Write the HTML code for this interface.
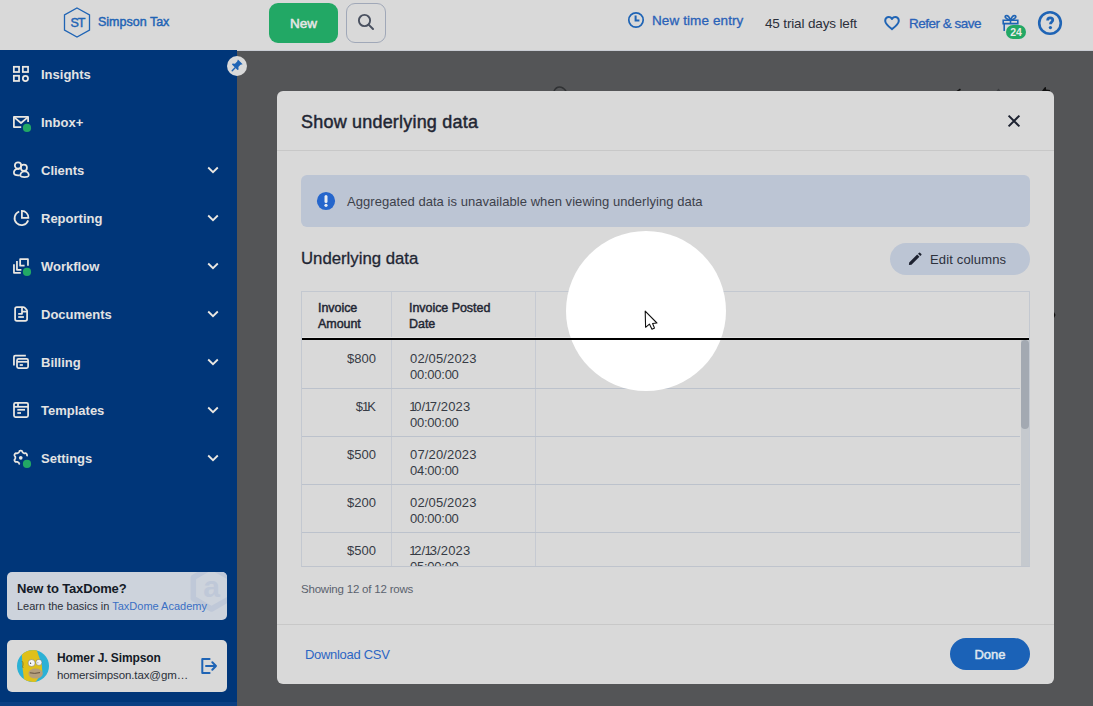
<!DOCTYPE html>
<html><head><meta charset="utf-8">
<style>
*{box-sizing:border-box;margin:0;padding:0}
html,body{width:1093px;height:706px;overflow:hidden;background:#545557;font-family:"Liberation Sans",sans-serif}
.a{position:absolute;white-space:nowrap}
#hdr{position:absolute;left:0;top:0;width:1093px;height:50px;background:#d9d9d9}
#hline{position:absolute;left:237px;top:50px;width:856px;height:1px;background:#c9ccd3}
#side{position:absolute;left:0;top:50px;width:237px;height:656px;background:#003679}
.nav{position:absolute;left:0;width:237px;height:48px}
.nav .t{position:absolute;left:41px;top:1px;line-height:48px;font-size:13px;font-weight:bold;color:#e3e3e3}
.nav svg.ic{position:absolute;left:8px;top:10px}
.nav svg.ch{position:absolute;left:207px;top:20px}
#modal{position:absolute;left:277px;top:91px;width:777px;height:593px;background:#d9d9d9;border-radius:6px}
.th{font-size:12.5px;line-height:16px;color:#1f2633;letter-spacing:-0.05px;-webkit-text-stroke:0.45px #1f2633}
.amt{left:16px;width:58px;text-align:right;font-size:13px;line-height:16px;color:#363b45}
.dt{left:108px;font-size:13px;line-height:16px;color:#363b45;letter-spacing:0.15px}
.tm{letter-spacing:-0.25px}
.rl{left:0;width:718px;height:1px;background:#bcc2cc}
#tbl{overflow:hidden}
.o{letter-spacing:-2px;margin-left:-1px}
.o0{letter-spacing:-2.2px;margin-left:-0.8px}
</style></head><body>
<div id="hdr">
  <!-- logo -->
  <svg class="a" style="left:63px;top:7px" width="28" height="31" viewBox="0 0 28 31">
    <path d="M14 1 L26.5 8 L26.5 23 L14 30 L1.5 23 L1.5 8 Z" fill="none" stroke="#1f64b5" stroke-width="1.3"/>
  </svg>
  <div class="a" style="left:70.5px;top:12.5px;font-size:12.5px;color:#1f64b5;line-height:20px;letter-spacing:-1px;-webkit-text-stroke:0.45px #1f64b5">ST</div>
  <div class="a" style="left:98px;top:12px;font-size:12.5px;color:#1f64b5;line-height:20px;letter-spacing:0px;-webkit-text-stroke:0.45px #1f64b5">Simpson Tax</div>
  <div class="a" style="left:269px;top:3px;width:69px;height:40px;border-radius:9px;background:#22a865;color:#e6e6e6;font-size:13.5px;text-align:center;line-height:42px;-webkit-text-stroke:0.5px #e6e6e6">New</div>
  <div class="a" style="left:346px;top:3px;width:40px;height:40px;border-radius:9px;border:1px solid #a0a8b8"></div>
  <svg class="a" style="left:357px;top:13px" width="18" height="18" viewBox="0 0 18 18">
    <circle cx="7.5" cy="7.5" r="5.6" fill="none" stroke="#4a5160" stroke-width="1.9"/>
    <path d="M11.6 11.6 L16 16" stroke="#4a5160" stroke-width="2" stroke-linecap="round"/>
  </svg>
  <!-- time entry -->
  <svg class="a" style="left:627px;top:11px" width="18" height="18" viewBox="0 0 18 18">
    <circle cx="9" cy="9" r="7.2" fill="none" stroke="#1f64b5" stroke-width="1.7"/>
    <path d="M8.6 4.6 V9.4 H12.4" fill="none" stroke="#1f64b5" stroke-width="2"/>
  </svg>
  <div class="a" style="left:652px;top:10.5px;font-size:13.5px;color:#2a62b8;line-height:20px;letter-spacing:0.1px;-webkit-text-stroke:0.3px #2a62b8">New time entry</div>
  <div class="a" style="left:765px;top:14px;font-size:13.5px;color:#2b2f3a;line-height:20px;letter-spacing:-0.15px">45 trial days left</div>
  <svg class="a" style="left:883px;top:15px" width="18" height="16" viewBox="0 0 18 16">
    <path d="M9 14.1 C6 11.8 2.4 9.2 2.2 6 C2.1 3.4 3.9 2.1 5.8 2.1 C7.3 2.1 8.3 2.9 9 4 C9.7 2.9 10.7 2.1 12.2 2.1 C14.1 2.1 15.9 3.4 15.8 6 C15.6 9.2 12 11.8 9 14.1 Z" fill="none" stroke="#1f64b5" stroke-width="2" stroke-linejoin="round"/>
  </svg>
  <div class="a" style="left:909px;top:13.5px;font-size:13.5px;color:#2a62b8;line-height:20px;letter-spacing:-0.5px;-webkit-text-stroke:0.3px #2a62b8">Refer &amp; save</div>
  <!-- gift -->
  <svg class="a" style="left:1001px;top:13px" width="20" height="20" viewBox="0 0 20 20">
    <path d="M2.2 7.3 H16.8 V10.6 H2.2 Z" fill="none" stroke="#1f64b5" stroke-width="1.6"/>
    <path d="M3.2 10.6 V18" stroke="#1f64b5" stroke-width="1.6"/>
    <path d="M9.5 7.3 C8.5 4.5 6.5 2.2 4.8 2.8 C3.3 3.4 4.3 6.2 9.5 7.3 C10.5 4.5 12.5 2.2 14.2 2.8 C15.7 3.4 14.7 6.2 9.5 7.3" fill="none" stroke="#1f64b5" stroke-width="1.6"/>
    <path d="M9.5 7.3 V10.6" stroke="#1f64b5" stroke-width="1.6"/>
  </svg>
  <div class="a" style="left:1006px;top:25px;width:20px;height:14px;border-radius:7px;background:#22a865;color:#eaeaea;font-size:10.5px;font-weight:bold;text-align:center;line-height:14px">24</div>
  <svg class="a" style="left:1037px;top:10px" width="26" height="26" viewBox="0 0 26 26">
    <circle cx="13" cy="13" r="10.8" fill="none" stroke="#1f64b5" stroke-width="2.6"/>
    <path d="M10.6 10.4 C10.6 8.7 11.7 7.9 13.2 7.9 C14.8 7.9 15.8 8.8 15.8 10.1 C15.8 11.9 13.4 12.1 13.4 14.3" fill="none" stroke="#1f64b5" stroke-width="2.7"/>
    <circle cx="13.4" cy="17.6" r="1.65" fill="#1f64b5"/>
  </svg>
</div>
<div id="hline"></div>
<div id="side">
<div class="nav" style="top:0px"><svg class="ic" width="30" height="30" viewBox="0 0 30 30"><g fill="none" stroke="#ebe8e2" stroke-width="1.75"><rect x="5.85" y="6.8" width="5.2" height="5.2"/><rect x="14.85" y="6.8" width="5.2" height="5.2"/><rect x="5.85" y="15.75" width="5.2" height="5.2"/><circle cx="17.45" cy="18.4" r="2.6"/></g></svg><div class="t">Insights</div></div>
<div class="nav" style="top:48px"><svg class="ic" width="30" height="30" viewBox="0 0 30 30"><g fill="none" stroke="#ebe8e2" stroke-width="1.75" stroke-linejoin="round"><path d="M13.2 19 H5.9 V8.95 H20.1 V13.9"/><path d="M6.3 9.4 L13 15 L19.7 9.4"/></g><circle cx="19" cy="19.9" r="4.1" fill="#22a865"/></svg><div class="t">Inbox+</div></div>
<div class="nav" style="top:96px"><svg class="ic" width="30" height="30" viewBox="0 0 30 30"><g fill="none" stroke="#ebe8e2" stroke-width="1.75"><circle cx="10" cy="9.4" r="3.15"/><path d="M11.6 13.2 C11 13 10.5 12.9 9.8 12.9 C7.2 12.9 5.7 14.6 5.9 16.9 C6.1 18.8 8 19.3 10.2 19.3 H11.8"/><circle cx="15.9" cy="11.7" r="3.05"/><path d="M16.6 15.4 C20 15.4 21.2 18 20.6 19.8 C20.1 21.1 18.4 21.1 16.5 21.1 C14.6 21.1 12.9 21.1 12.5 19.8 C12 18 13.2 15.4 16.6 15.4 Z"/></g></svg><div class="t">Clients</div><svg class="ch" width="12" height="8" viewBox="0 0 12 8"><path d="M1.2 1.5 L6 6.2 L10.8 1.5" fill="none" stroke="#ebe8e2" stroke-width="1.8"/></svg></div>
<div class="nav" style="top:144px"><svg class="ic" width="30" height="30" viewBox="0 0 30 30"><g fill="none" stroke="#ebe8e2" stroke-width="1.75"><path d="M11.2 7.5 A7 7 0 1 0 20.2 16.4"/><path d="M13.9 6.95 V13.8 H20.4 A6.6 6.6 0 0 0 13.9 6.95 Z"/></g></svg><div class="t">Reporting</div><svg class="ch" width="12" height="8" viewBox="0 0 12 8"><path d="M1.2 1.5 L6 6.2 L10.8 1.5" fill="none" stroke="#ebe8e2" stroke-width="1.8"/></svg></div>
<div class="nav" style="top:192px"><svg class="ic" width="30" height="30" viewBox="0 0 30 30"><g fill="none" stroke="#ebe8e2" stroke-width="1.75" stroke-linejoin="round"><path d="M5.95 12.2 V20.8 H12.8"/><path d="M8.95 9.1 V17.8 H13.4"/><path d="M16.6 13.65 H12.15 V7.05 H19.95 V13.8"/></g><circle cx="19" cy="19.9" r="4.1" fill="#22a865"/></svg><div class="t">Workflow</div><svg class="ch" width="12" height="8" viewBox="0 0 12 8"><path d="M1.2 1.5 L6 6.2 L10.8 1.5" fill="none" stroke="#ebe8e2" stroke-width="1.8"/></svg></div>
<div class="nav" style="top:240px"><svg class="ic" width="30" height="30" viewBox="0 0 30 30"><g fill="none" stroke="#ebe8e2" stroke-width="1.75" stroke-linejoin="round"><path d="M8.9 7.1 H15.2 Q16 7.1 16.6 7.7 L18.5 9.6 Q19.1 10.2 19.1 11 V19.1 Q19.1 20.9 17.3 20.9 H8.9 Q7.1 20.9 7.1 19.1 V8.9 Q7.1 7.1 8.9 7.1 Z"/><path d="M14 7.1 V13.8 H10.2"/><path d="M14 11.6 H19"/><path d="M10.2 17 H15.9"/></g></svg><div class="t">Documents</div><svg class="ch" width="12" height="8" viewBox="0 0 12 8"><path d="M1.2 1.5 L6 6.2 L10.8 1.5" fill="none" stroke="#ebe8e2" stroke-width="1.8"/></svg></div>
<div class="nav" style="top:288px"><svg class="ic" width="30" height="30" viewBox="0 0 30 30"><g fill="none" stroke="#ebe8e2" stroke-width="1.75" stroke-linejoin="round"><path d="M5.95 17.6 V8.9 Q5.95 7.6 7.3 7.6 H17.85"/><rect x="9" y="10.9" width="11.1" height="9.2" rx="1.5"/><path d="M9 13.8 H20.1"/><path d="M11.7 17 H14.9"/></g></svg><div class="t">Billing</div><svg class="ch" width="12" height="8" viewBox="0 0 12 8"><path d="M1.2 1.5 L6 6.2 L10.8 1.5" fill="none" stroke="#ebe8e2" stroke-width="1.8"/></svg></div>
<div class="nav" style="top:336px"><svg class="ic" width="30" height="30" viewBox="0 0 30 30"><g fill="none" stroke="#ebe8e2" stroke-width="1.75" stroke-linejoin="round"><rect x="6" y="6.85" width="14.1" height="14.15" rx="1.5"/><path d="M6 10.8 H20.1"/><path d="M10 6.85 V10.8"/><path d="M9.3 13.8 H17"/><path d="M9.3 17 H13"/></g></svg><div class="t">Templates</div><svg class="ch" width="12" height="8" viewBox="0 0 12 8"><path d="M1.2 1.5 L6 6.2 L10.8 1.5" fill="none" stroke="#ebe8e2" stroke-width="1.8"/></svg></div>
<div class="nav" style="top:384px"><svg class="ic" width="30" height="30" viewBox="0 0 30 30"><g fill="none" stroke="#ebe8e2" stroke-width="1.75" stroke-linejoin="round"><path d="M18.57 12.15 L18.78 11.90 L18.95 11.64 L19.04 11.39 L19.07 11.16 L19.05 10.94 L19.00 10.74 L18.92 10.54 L18.83 10.34 L18.73 10.16 L18.62 9.97 L18.50 9.80 L18.36 9.63 L18.21 9.48 L18.03 9.35 L17.82 9.26 L17.56 9.21 L17.26 9.23 L16.94 9.28 L16.65 9.32 L16.41 9.33 L16.21 9.30 L16.04 9.24 L15.88 9.17 L15.74 9.09 L15.59 9.00 L15.45 8.92 L15.30 8.84 L15.16 8.75 L15.01 8.66 L14.87 8.57 L14.74 8.45 L14.61 8.29 L14.50 8.07 L14.39 7.79 L14.27 7.49 L14.13 7.22 L13.96 7.02 L13.77 6.89 L13.57 6.81 L13.37 6.75 L13.16 6.72 L12.94 6.70 L12.73 6.70 L12.52 6.71 L12.30 6.73 L12.09 6.76 L11.89 6.82 L11.69 6.91 L11.50 7.06 L11.34 7.27 L11.20 7.55 L11.09 7.85 L10.98 8.12 L10.86 8.32 L10.74 8.47 L10.60 8.59 L10.46 8.68 L10.32 8.77 L10.17 8.85 L10.03 8.94 L9.88 9.02 L9.74 9.10 L9.59 9.18 L9.43 9.25 L9.26 9.31 L9.05 9.33 L8.80 9.32 L8.50 9.27 L8.18 9.22 L7.88 9.22 L7.63 9.27 L7.43 9.37 L7.26 9.51 L7.11 9.66 L6.98 9.83 L6.86 10.01 L6.75 10.19 L6.65 10.38 L6.56 10.58 L6.49 10.78 L6.44 10.99 L6.43 11.21 L6.47 11.44 L6.58 11.69 L6.76 11.95 L6.96 12.19 L7.14 12.42 L7.25 12.62 L7.31 12.80 L7.34 12.98 L7.35 13.15 L7.35 13.31 L7.35 13.48 L7.35 13.65 L7.35 13.82 L7.35 13.98 L7.34 14.15 L7.32 14.32 L7.28 14.50 L7.19 14.70 L7.04 14.91 L6.85 15.15 L6.65 15.40 L6.51 15.66 L6.44 15.90 L6.43 16.12 L6.47 16.34 L6.53 16.54 L6.61 16.74 L6.71 16.93 L6.81 17.12 L6.93 17.29 L7.05 17.47 L7.19 17.63 L7.35 17.77 L7.54 17.89 L7.77 17.97 L8.05 17.99 L8.36 17.95 L8.68 17.90 L8.95 17.87 L9.17 17.88 L9.36 17.92 L9.52 17.99 L9.67 18.06 L9.82 18.14 L9.97 18.23 L10.11 18.31 L10.26 18.40 L10.40 18.48 L10.54 18.57 L10.68 18.68 L10.81 18.81 L10.93 18.99 L11.04 19.23 L11.15 19.53 L11.28 19.82 L11.43 20.06 L11.61 20.23 L11.80 20.35"/></g><circle cx="12.75" cy="13.8" r="1.85" fill="#ebe8e2"/><circle cx="19" cy="19.9" r="4.1" fill="#22a865"/></svg><div class="t">Settings</div><svg class="ch" width="12" height="8" viewBox="0 0 12 8"><path d="M1.2 1.5 L6 6.2 L10.8 1.5" fill="none" stroke="#ebe8e2" stroke-width="1.8"/></svg></div>
</div>
<svg class="a" style="left:540px;top:80px" width="520" height="12" viewBox="540 80 520 12">
  <path d="M554 91 Q556 87 559.5 87 Q563 87 566 91" fill="none" stroke="#303234" stroke-width="1.6"/>
  <path d="M956.5 91 L960 88.5 L961 90 L959 91 Z" fill="#111"/>
  <path d="M996.5 91 L998.5 88.5 L1000.5 91 Z" fill="#3a3c3f"/>
  <path d="M1042 91 L1044.5 87.5 L1046 87 L1046 89.5 L1050 90 L1050 91 Z" fill="#111"/>
</svg>
<svg class="a" style="left:1053px;top:310px" width="4" height="10" viewBox="0 0 4 10"><path d="M1 2 L2.5 5 L1 8 Z" fill="#111"/></svg>
<div id="modal">
  <div class="a" style="left:24px;top:21px;font-size:18px;line-height:20px;color:#1f2633;letter-spacing:0.2px;-webkit-text-stroke:0.45px #1f2633">Show underlying data</div>
  <svg class="a" style="left:730px;top:23px" width="14" height="14" viewBox="0 0 14 14"><path d="M1.6 1.6 L12.4 12.4 M12.4 1.6 L1.6 12.4" stroke="#1d2230" stroke-width="2"/></svg>
  <div class="a" style="left:0;top:59px;width:777px;height:1px;background:#c8c8c8"></div>
  <div class="a" style="left:24px;top:84px;width:729px;height:52px;border-radius:6px;background:#bcc5d4">
    <svg class="a" style="left:15px;top:16px" width="20" height="20" viewBox="0 0 20 20"><circle cx="10" cy="10" r="9.1" fill="#2566cc"/><path d="M10 5.6 V10.4" stroke="#e8ecf2" stroke-width="3" stroke-linecap="round"/><circle cx="10" cy="14.3" r="1.6" fill="#e8ecf2"/></svg>
    <div class="a" style="left:46px;top:16.5px;font-size:13px;line-height:20px;color:#3c414b;letter-spacing:0.05px">Aggregated data is unavailable when viewing underlying data</div>
  </div>
  <div class="a" style="left:24px;top:158px;font-size:16.75px;line-height:20px;color:#1f2633;-webkit-text-stroke:0.3px #1f2633">Underlying data</div>
  <div class="a" style="left:613px;top:152px;width:140px;height:32px;border-radius:16px;background:#bcc5d4">
    <svg class="a" style="left:17px;top:8px" width="16" height="16" viewBox="-0.8 -0.8 17.6 17.6"><path d="M1.3 14.7 L1.6 11.9 L10.4 3.1 L12.9 5.6 L4.1 14.4 Z M11.3 2.2 L12.5 1 Q13 0.6 13.5 1 L15 2.5 Q15.4 3 15 3.5 L13.8 4.7 Z" fill="#1d2230"/></svg>
    <div class="a" style="left:40px;top:6.5px;font-size:13px;line-height:20px;color:#2c313c;letter-spacing:0.15px">Edit columns</div>
  </div>
  <div id="tbl" class="a" style="left:24px;top:200px;width:729px;height:276px;border:1px solid #c3c8d0;border-bottom-color:#bfc4cd">
    <div class="a" style="left:89px;top:0;width:1px;height:274px;background:#c6cad2"></div>
    <div class="a" style="left:233px;top:0;width:1px;height:274px;background:#c6cad2"></div>
    <div class="a th" style="left:16px;top:8.1px">Invoice<br>Amount</div>
    <div class="a th" style="left:107px;top:8.1px">Invoice Posted<br>Date</div>
    <div class="a" style="left:0;top:45px;width:727px;height:1px;background:#e4e4e4"></div>
    <div class="a" style="left:0;top:46px;width:727px;height:2px;background:#000"></div>
    <div class="a amt" style="top:59px">$800</div><div class="a dt" style="top:59px">02/05/2023<br><span class="tm">00:00:00</span></div><div class="a rl" style="top:96px"></div><div class="a amt" style="top:107px">$<span class="o">1</span>K</div><div class="a dt" style="top:107px"><span class="o0">1</span>0/<span class="o">1</span>7/2023<br><span class="tm">00:00:00</span></div><div class="a rl" style="top:144px"></div><div class="a amt" style="top:155px">$500</div><div class="a dt" style="top:155px">07/20/2023<br><span class="tm">04:00:00</span></div><div class="a rl" style="top:192px"></div><div class="a amt" style="top:203px">$200</div><div class="a dt" style="top:203px">02/05/2023<br><span class="tm">00:00:00</span></div><div class="a rl" style="top:240px"></div><div class="a amt" style="top:251px">$500</div><div class="a dt" style="top:251px"><span class="o0">1</span>2/<span class="o">1</span>3/2023<br><span class="tm">05:00:00</span></div>
    <div class="a" style="left:719px;top:48px;width:9px;height:226px;background:#c5c9ce"></div>
    <div class="a" style="left:719px;top:48px;width:8px;height:89px;border-radius:4px;background:#a3a9b2"></div>
  </div>
  <div class="a" style="left:24px;top:490px;font-size:11.5px;line-height:16px;color:#5b626e;letter-spacing:-0.2px">Showing 12 of 12 rows</div>
  <div class="a" style="left:0;top:533px;width:777px;height:1px;background:#c8c8c8"></div>
  <div class="a" style="left:28px;top:554px;font-size:13px;line-height:20px;color:#2d66c4;letter-spacing:-0.3px">Download CSV</div>
  <div class="a" style="left:673px;top:547px;width:80px;height:32px;border-radius:16px;background:#1b62b7;color:#dfe6ef;font-size:13px;text-align:center;line-height:34px;-webkit-text-stroke:0.5px #dfe6ef">Done</div>
</div>

<div class="a" style="left:0;top:702px;width:237px;height:4px;background:#0a3f83"></div>
<div class="a" style="left:227px;top:56px;width:20px;height:20px;border-radius:50%;background:#d9d9d9"></div>
<svg class="a" style="left:229px;top:58px" width="16" height="16" viewBox="0 0 16 16">
  <g transform="translate(-0.4,-0.6) translate(9,7) scale(1.1) translate(-9,-7)"><path d="M9.3 2.5 L13.6 6.8 L11.6 7.4 L9.7 9.4 L9.9 11.6 L8.9 12.1 L3.9 7.1 L4.4 6.1 L6.6 6.3 L8.6 4.4 Z" fill="#1f64b5"/></g>
  <path d="M6.1 9.8 L3.2 12.7" stroke="#1f64b5" stroke-width="1.4" stroke-linecap="round"/>
</svg>
<!-- TaxDome card -->
<div class="a" style="left:7px;top:572px;width:220px;height:48px;border-radius:5px;background:#cdd3dc;overflow:hidden">
  <svg class="a" style="left:0;top:0" width="220" height="48" viewBox="0 0 220 48">
    <path d="M204.50 -5.00 L222.69 5.50 L222.69 26.50 L204.50 37.00 L186.31 26.50 L186.31 5.50 Z" fill="none" stroke="#bfc8d8" stroke-width="5.5" stroke-linejoin="round"/>
    <text x="204.5" y="24.5" text-anchor="middle" font-family="Liberation Sans" font-size="30" font-weight="bold" fill="#bfc8d8">a</text>
  </svg>
  <div class="a" style="left:10px;top:8.5px;font-size:13px;font-weight:bold;line-height:16px;color:#141a26;letter-spacing:-0.15px">New to TaxDome?</div>
  <div class="a" style="left:10px;top:25.5px;font-size:11px;line-height:16px;color:#2b303a">Learn the basics in <span style="color:#3a6fc4">TaxDome Academy</span></div>
</div>
<!-- user card -->
<div class="a" style="left:7px;top:640px;width:220px;height:52px;border-radius:5px;background:#d9d9d9">
  <svg class="a" style="left:10px;top:10px" width="32" height="32" viewBox="0 0 32 32">
    <defs><clipPath id="cp"><circle cx="16" cy="16" r="16"/></clipPath></defs>
    <circle cx="16" cy="16" r="16" fill="#2cb1d5"/>
    <g clip-path="url(#cp)">
      <path d="M4.9 4.5 Q7 0.5 11.2 0.2 L19.7 0 L24.8 14.7 L25.3 22 L18.5 32.3 L7.2 31.1 L5.5 17.5 Z" fill="#dfc01a"/>
      <path d="M4.9 11 Q6.5 12.5 6 15 Q5 17 6.2 18" fill="none" stroke="#6b5a20" stroke-width="0.6"/>
      <ellipse cx="18.6" cy="23.6" rx="7.2" ry="5" fill="#b59f7c"/>
      <path d="M12.8 22.8 Q17.5 24 23 22.6" fill="none" stroke="#5a4a3a" stroke-width="0.9"/>
      <circle cx="14.6" cy="13" r="3.5" fill="#f4f4f4" stroke="#555" stroke-width="0.4"/>
      <circle cx="21.9" cy="12.4" r="3" fill="#f4f4f4" stroke="#555" stroke-width="0.4"/>
      <circle cx="13.6" cy="13.2" r="0.6" fill="#222"/><circle cx="20.9" cy="12.8" r="0.5" fill="#777"/>
    </g>
  </svg>
  <div class="a" style="left:50px;top:10px;font-size:12px;font-weight:bold;line-height:16px;color:#141a26;letter-spacing:-0.1px">Homer J. Simpson</div>
  <div class="a" style="left:50px;top:26.5px;font-size:11.5px;line-height:16px;color:#2b303a;letter-spacing:-0.1px">homersimpson.tax@gm&hellip;</div>
  <svg class="a" style="left:193px;top:17px" width="18" height="18" viewBox="0 0 18 18">
    <path d="M9.6 2 H2.3 V16 H9.6" fill="none" stroke="#1f64b5" stroke-width="2" stroke-linecap="round" stroke-linejoin="round"/>
    <path d="M6 9 H16 M12.3 5.2 L16 9 L12.3 12.8" fill="none" stroke="#1f64b5" stroke-width="2" stroke-linecap="round" stroke-linejoin="round"/>
  </svg>
</div>
<!-- highlight circle + cursor -->
<div class="a" style="left:565.5px;top:231px;width:160px;height:160px;border-radius:50%;background:#fff"></div>
<div class="a" style="left:565px;top:338px;width:161px;height:2px;background:#000"></div>
<svg class="a" style="left:640px;top:306px" width="24" height="28" viewBox="0 0 24 28">
  <path d="M5.2 5.1 L5.6 21.3 L9.4 18.1 L12 23.2 L14.5 22.1 L12.6 17.5 L16.9 17 Z" fill="#fff" stroke="#111" stroke-width="1.1" stroke-linejoin="round"/>
</svg>
</body></html>
